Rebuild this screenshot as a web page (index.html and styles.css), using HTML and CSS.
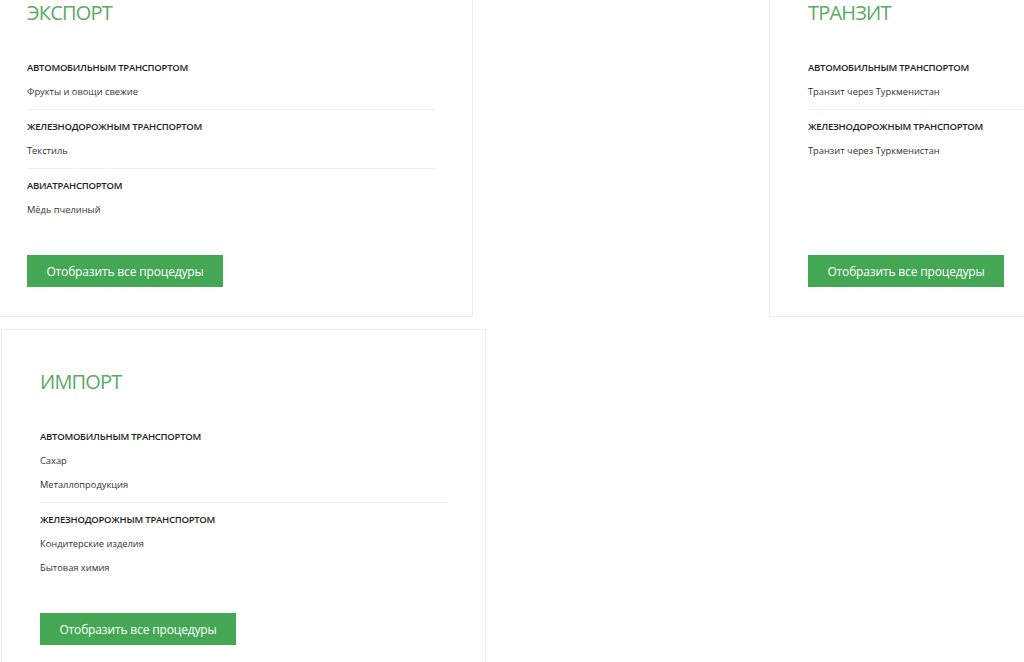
FILE: index.html
```html
<!DOCTYPE html>
<html lang="ru">
<head>
    <meta charset="UTF-8">
    <meta name="viewport" content="width=device-width, initial-scale=1.0">
    <title>Процедуры</title>
    <link rel="stylesheet" href="styles.css">
</head>
<body>

<div class="page">
    <div class="row row-top">
        <!-- Экспорт -->
        <div class="card">
            <h2 class="card-title">ЭКСПОРТ</h2>
            <div class="groups">
                <div class="group">
                    <div class="group-title">АВТОМОБИЛЬНЫМ ТРАНСПОРТОМ</div>
                    <div class="group-item">Фрукты и овощи свежие</div>
                </div>
                <div class="group">
                    <div class="group-title">ЖЕЛЕЗНОДОРОЖНЫМ ТРАНСПОРТОМ</div>
                    <div class="group-item">Текстиль</div>
                </div>
                <div class="group">
                    <div class="group-title">АВИАТРАНСПОРТОМ</div>
                    <div class="group-item">Мёдь пчелиный</div>
                </div>
            </div>
            <button class="btn">Отобразить все процедуры</button>
        </div>

        <!-- Транзит -->
        <div class="card">
            <h2 class="card-title">ТРАНЗИТ</h2>
            <div class="groups">
                <div class="group">
                    <div class="group-title">АВТОМОБИЛЬНЫМ ТРАНСПОРТОМ</div>
                    <div class="group-item">Транзит через Туркменистан</div>
                </div>
                <div class="group">
                    <div class="group-title">ЖЕЛЕЗНОДОРОЖНЫМ ТРАНСПОРТОМ</div>
                    <div class="group-item">Транзит через Туркменистан</div>
                </div>
            </div>
            <button class="btn">Отобразить все процедуры</button>
        </div>
    </div>

    <div class="row row-bottom">
        <!-- Импорт -->
        <div class="card">
            <h2 class="card-title">ИМПОРТ</h2>
            <div class="groups">
                <div class="group">
                    <div class="group-title">АВТОМОБИЛЬНЫМ ТРАНСПОРТОМ</div>
                    <div class="group-item">Сахар</div>
                    <div class="group-item">Металлопродукция</div>
                </div>
                <div class="group">
                    <div class="group-title">ЖЕЛЕЗНОДОРОЖНЫМ ТРАНСПОРТОМ</div>
                    <div class="group-item">Кондитерские изделия</div>
                    <div class="group-item">Бытовая химия</div>
                </div>
            </div>
            <button class="btn">Отобразить все процедуры</button>
        </div>
    </div>
</div>

</body>
</html>
```

FILE: styles.css
```css
/* Base */
body {
    margin: 0;
    padding: 0;
    background-color: #fff;
    font-family: "Open Sans", "Noto Sans", Arial, sans-serif;
    color: #222;
    overflow: hidden;
}

/* page is shown scrolled a little */
.page {
    margin-top: -40px;
}

.row {
    display: flex;
}

.row-top {
    gap: 296px;
    margin-left: -12px;
}

.row-bottom {
    margin-top: 12px;
    padding-left: 1px;
}

/* Cards */
.card {
    box-sizing: border-box;
    width: 485px;
    flex-shrink: 0;
    border: 1px solid #ececec;
    padding: 40px 37px 29px 38px;
    display: flex;
    flex-direction: column;
}

.card-title {
    margin: 0 0 26px;
    font-size: 20px;
    line-height: 24px;
    font-weight: 400;
    letter-spacing: -0.8px;
    color: #5aab62;
}

.groups {
    margin-bottom: 28px;
}

.group {
    padding: 5px 0;
    border-bottom: 1px solid #eeeeee;
}

.group:last-child {
    border-bottom: none;
}

.group-title {
    font-size: 9.5px;
    font-weight: 600;
    line-height: 24px;
    letter-spacing: -0.25px;
    color: #1e1e1e;
}

.group-item {
    font-size: 9.3px;
    line-height: 24px;
    color: #333;
}

/* Button */
.btn {
    margin-top: auto;
    align-self: flex-start;
    width: 196px;
    height: 32px;
    border: none;
    background-color: #43a754;
    color: #fff;
    font-family: inherit;
    font-size: 12px;
    letter-spacing: -0.15px;
    cursor: pointer;
}
```
